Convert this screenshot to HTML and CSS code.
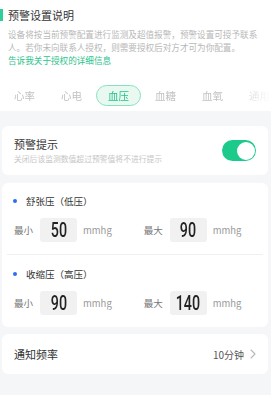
FILE: index.html
```html
<!DOCTYPE html>
<html lang="zh-CN">
<head>
<meta charset="utf-8">
<link rel="stylesheet" href="styles.css">
</head>
<body>
<div class="page">
  <header class="intro">
    <h1 class="intro-title">预警设置说明</h1>
    <p class="intro-desc">设备将按当前预警配置进行监测及超值报警，预警设置可授予联系人。若你未向联系人授权，则需要授权后对方才可为你配置。</p>
    <a class="intro-link">告诉我关于授权的详细信息</a>
    <nav class="tabs">
      <span class="tab">心率</span>
      <span class="tab">心电</span>
      <span class="tab tab-active">血压</span>
      <span class="tab">血糖</span>
      <span class="tab">血氧</span>
      <span class="tab">通用</span>
    </nav>
  </header>

  <main class="content">
    <section class="card card-alert">
      <div class="alert-text">
        <div class="alert-title">预警提示</div>
        <div class="alert-sub">关闭后该监测数值超过预警值将不进行提示</div>
      </div>
      <div class="switch"><span class="switch-knob"></span></div>
    </section>

    <section class="card card-range">
      <div class="range-title"><span class="dot"></span>舒张压（低压）</div>
      <div class="range-row">
        <div class="range-item"><span class="range-label">最小</span><span class="num-box"><span class="num">50</span></span><span class="unit">mmhg</span></div>
        <div class="range-item"><span class="range-label">最大</span><span class="num-box"><span class="num">90</span></span><span class="unit">mmhg</span></div>
      </div>
      <div class="divider"></div>
      <div class="range-title"><span class="dot"></span>收缩压（高压）</div>
      <div class="range-row">
        <div class="range-item"><span class="range-label">最小</span><span class="num-box"><span class="num">90</span></span><span class="unit">mmhg</span></div>
        <div class="range-item"><span class="range-label">最大</span><span class="num-box"><span class="num">140</span></span><span class="unit">mmhg</span></div>
      </div>
    </section>

    <section class="card card-freq">
      <span class="freq-label">通知频率</span>
      <span class="freq-value">10分钟
        <svg class="chevron" width="6" height="10" viewBox="0 0 6 10"><polyline points="1,1 5,5 1,9" fill="none" stroke="#b8b8b8" stroke-width="1.1" stroke-linecap="round" stroke-linejoin="round"/></svg>
      </span>
    </section>
  </main>
</div>
</body>
</html>
```

FILE: styles.css
```css
* { box-sizing: border-box; }
html, body { margin: 0; padding: 0; }
body {
  background: #f5f6f8;
  font-family: "Noto Sans CJK SC", "Noto Sans", sans-serif;
  color: #333;
  width: 271px;
  min-height: 395px;
  overflow: hidden;
}
.intro {
  background: #fff;
  padding: 9px 8px 5px 0;
}
.intro-title {
  margin: 0;
  font-size: 11px;
  line-height: 12px;
  font-weight: 400;
  color: #333;
  border-left: 3px solid #2fcf97;
  padding-left: 5px;
}
.intro-desc {
  margin: 7px 0 0 8px;
  font-size: 8.6px;
  line-height: 13px;
  color: #b8b8b8;
}
.intro-link {
  display: block;
  margin-left: 8px;
  font-size: 8.6px;
  line-height: 13px;
  color: #2cc48b;
}
.tabs {
  margin-top: 18px;
  display: flex;
  gap: 2px;
  padding-left: 2px;
  width: 271px;
  overflow: hidden;
  -webkit-mask-image: linear-gradient(to right, #000 84%, transparent 100%);
  mask-image: linear-gradient(to right, #000 84%, transparent 100%);
}
.tab {
  flex: 0 0 45px;
  height: 21px;
  display: flex;
  align-items: center;
  justify-content: center;
  font-size: 10.5px;
  color: #c2c2c2;
  border-radius: 11px;
  border: 1px solid transparent;
}
.tab-active {
  color: #25c48a;
  background: #e9f9f2;
  border-color: #86e2bd;
}
.content {
  padding: 15px 3px 0 2px;
}
.card {
  background: #fff;
  border-radius: 6px;
}
.card-alert {
  display: flex;
  align-items: center;
  justify-content: space-between;
  padding: 11px 12px;
}
.alert-title {
  font-size: 11px;
  line-height: 14px;
  color: #333;
}
.alert-sub {
  margin-top: 3px;
  font-size: 7.8px;
  line-height: 10px;
  color: #c6c6c6;
}
.switch {
  width: 34px;
  height: 21px;
  border-radius: 11px;
  background: #1ccb8c;
  display: flex;
  justify-content: flex-end;
  align-items: center;
  padding: 1.5px;
}
.switch-knob {
  width: 18px;
  height: 18px;
  border-radius: 50%;
  background: #fff;
}
.card-range {
  margin-top: 8px;
  padding: 11px 12px 12px;
}
.range-title {
  display: flex;
  align-items: center;
  font-size: 9.5px;
  line-height: 14px;
  color: #333;
}
.dot {
  width: 4px;
  height: 4px;
  border-radius: 50%;
  background: #2d6df0;
  margin-left: -1px;
  margin-right: 9px;
}
.range-row {
  display: flex;
  gap: 32px;
  margin-top: 10px;
}
.range-item {
  display: flex;
  align-items: center;
}
.range-label {
  font-size: 9.5px;
  color: #777;
  margin-right: 7px;
}
.num-box {
  width: 37px;
  height: 24px;
  border-radius: 3px;
  background: #f1f1f1;
  display: flex;
  align-items: center;
  justify-content: center;
  overflow: hidden;
}
.num {
  display: inline-block;
  font-family: Roboto, "Liberation Sans", sans-serif;
  font-weight: 500;
  font-size: 21px;
  line-height: 24px;
  color: #222;
  transform: scaleX(0.68);
}
.unit {
  margin-left: 6px;
  font-size: 9.5px;
  color: #999;
}
.divider {
  height: 1px;
  background: #f0f0f2;
  margin: 12px -7px 12px;
}
.card-freq {
  margin-top: 7px;
  height: 40px;
  padding: 0 12px;
  display: flex;
  align-items: center;
  justify-content: space-between;
}
.freq-label {
  font-size: 11px;
  color: #333;
}
.freq-value {
  display: flex;
  align-items: center;
  gap: 6px;
  font-size: 10px;
  color: #555;
}
.chevron { display: block; }
```
